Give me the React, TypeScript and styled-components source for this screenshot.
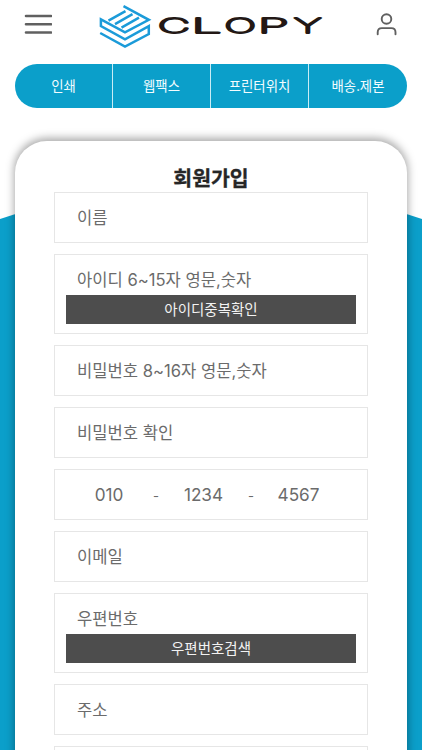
import React from 'react';
import styled, { createGlobalStyle } from 'styled-components';

const GlobalStyle = createGlobalStyle`
  *, *::before, *::after { box-sizing: border-box; }
  html, body, #root { height: 100%; }
  body {
    margin: 0;
    overflow: hidden;
    background: #fff;
    font-family: Inter, "Noto Sans CJK KR", sans-serif;
  }
`;

const Page = styled.div`
  height: 750px;
  display: flex;
  flex-direction: column;
  overflow: hidden;
`;

const Header = styled.header`
  flex: none;
  height: 64px;
  padding: 0 24px;
  display: grid;
  grid-template-columns: 28px 1fr 22px;
  align-items: start;
`;

const IconButton = styled.button<{ $top: number }>`
  margin: ${({ $top }) => $top}px 0 0;
  padding: 0;
  border: 0;
  background: none;
  color: #606060;
  svg { display: block; }
`;

const Brand = styled.a`
  margin: 5px 0 0 46px;
  display: flex;
  gap: 9px;
  svg { display: block; flex: none; overflow: visible; }
`;

const Nav = styled.nav`
  flex: none;
  height: 44px;
  margin: 0 15px;
  display: grid;
  grid-template-columns: 98px 98px 98px 98px;
  border-radius: 22px;
  overflow: hidden;
  background: #0b9fca;
`;

const NavItem = styled.a`
  display: flex;
  align-items: center;
  justify-content: center;
  padding-bottom: 3px;
  color: #f4fdff;
  font: 400 13.4px/20px "Noto Sans CJK KR", sans-serif;
  &:not(:last-child) { border-right: 1px solid #c9ecf5; }
`;

const Stage = styled.main`
  flex: 1;
  min-height: 0;
  margin-top: 33px;
  display: grid;
  grid-template: 609px / 1fr;
`;

const Backdrop = styled.div`
  grid-area: 1 / 1;
  background: #0b9fca;
  clip-path: polygon(0 78px, 14px 73.5px, 50% 20px, 408px 73.5px, 100% 78px, 100% 100%, 0 100%);
`;

const Card = styled.form`
  grid-area: 1 / 1;
  z-index: 1;
  height: 720px;
  margin: 0 15px;
  padding: 24px 39px 0;
  border-radius: 32px 32px 0 0;
  background: #fff;
  box-shadow: 0 -2px 8px 1px rgba(0, 0, 0, 0.34);
`;

const Title = styled.h1`
  margin: 0;
  height: 27px;
  text-align: center;
  color: #262626;
  font: 700 20.5px/25px "Noto Sans CJK KR", sans-serif;
  -webkit-text-stroke: 0.3px #262626;
`;

const Fields = styled.div`
  display: flex;
  flex-direction: column;
  gap: 11px;
`;

const Field = styled.div<{ $tall?: boolean }>`
  flex: none;
  width: 314px;
  height: ${({ $tall }) => ($tall ? 80 : 51)}px;
  padding: ${({ $tall }) => ($tall ? 12 : 11.5)}px 11px 0;
  border: 1px solid #e6e6e6;
`;

const Label = styled.div`
  height: 28px;
  padding-left: 11px;
  white-space: pre;
  color: #6b6b6b;
  font-size: 16.6px;
  line-height: 26px;
`;

const ActionButton = styled.button`
  display: block;
  width: 290px;
  height: 29px;
  padding: 0 0 1px;
  border: 0;
  background: #4d4d4d;
  color: #f2f2f2;
  font: 400 14.5px/28px "Noto Sans CJK KR", sans-serif;
`;

const PhoneRow = styled.div`
  display: grid;
  grid-template-columns: 86px 8px 87px 8px 87px;
  text-align: center;
  color: #6b6b6b;
  font-size: 17.2px;
  line-height: 25px;
`;

const Dash = styled.span`
  padding-top: 2px;
  font-size: 13px;
`;

const wordmark = [
  { char: 'C', x: 158, scale: 2.15 },
  { char: 'L', x: 191.5, scale: 2.6 },
  { char: 'O', x: 224.5, scale: 2.05 },
  { char: 'P', x: 258, scale: 2.45 },
  { char: 'Y', x: 294, scale: 2.1 },
];

function Logo() {
  return (
    <Brand aria-label="CLOPY">
      <svg width="52" height="44" viewBox="98 5 52 44" fill="none" stroke="#1b9bd9" strokeWidth="2.5">
        <path d="M123.5 6.2 148.8 19.8 125 32.3 100.9 19.3V26L125 39.3 148.8 26.2V34L125 46.6 100.2 33" />
        <path d="m125.5 11.2-17 9.5M132.5 14.2l-17.5 10M139 17.6l-17.5 10" />
      </svg>
      <svg width="166" height="44" viewBox="159 5 166 44" fill="#231815" stroke="#231815" strokeWidth="1.9" strokeLinejoin="round" fontFamily="Inter" fontWeight="100" fontSize="20.5">
        {wordmark.map(({ char, x, scale }) => (
          <text key={char} transform={`translate(${x} 33) scale(${scale} 1)`}>
            {char}
          </text>
        ))}
      </svg>
    </Brand>
  );
}

export default function App() {
  return (
    <>
      <GlobalStyle />
      <Page>
        <Header>
          <IconButton $top={14} aria-label="메뉴">
            <svg width="28" height="21" viewBox="0 0 28 21" stroke="currentColor" strokeWidth="2.6" strokeLinecap="round">
              <path d="M2 2h25M2 10.3h25M2 18.5h25" />
            </svg>
          </IconButton>
          <Logo />
          <IconButton $top={13} aria-label="내 계정">
            <svg width="22" height="23" viewBox="376 13 22 23" fill="none" stroke="currentColor" strokeWidth="1.9" strokeLinecap="round">
              <circle cx="386.5" cy="19" r="4.8" />
              <path d="M377.7 34.3v-2q0-4.2 4.2-4.2h9.4q4.2 0 4.2 4.2v2" />
            </svg>
          </IconButton>
        </Header>
        <Nav>
          <NavItem>인쇄</NavItem>
          <NavItem>웹팩스</NavItem>
          <NavItem>프린터위치</NavItem>
          <NavItem>배송.제본</NavItem>
        </Nav>
        <Stage>
          <Backdrop />
          <Card>
            <Title>회원가입</Title>
            <Fields>
              <Field><Label>이름</Label></Field>
              <Field $tall>
                <Label>아이디 6~15자 영문,숫자</Label>
                <ActionButton type="button">아이디중복확인</ActionButton>
              </Field>
              <Field><Label>비밀번호 8~16자 영문,숫자</Label></Field>
              <Field><Label>비밀번호 확인</Label></Field>
              <Field>
                <PhoneRow>
                  <span>010</span>
                  <Dash>-</Dash>
                  <span>1234</span>
                  <Dash>-</Dash>
                  <span>4567</span>
                </PhoneRow>
              </Field>
              <Field><Label>이메일</Label></Field>
              <Field $tall>
                <Label>우편번호</Label>
                <ActionButton type="button">우편번호검색</ActionButton>
              </Field>
              <Field><Label>주소</Label></Field>
              <Field />
            </Fields>
          </Card>
        </Stage>
      </Page>
    </>
  );
}
